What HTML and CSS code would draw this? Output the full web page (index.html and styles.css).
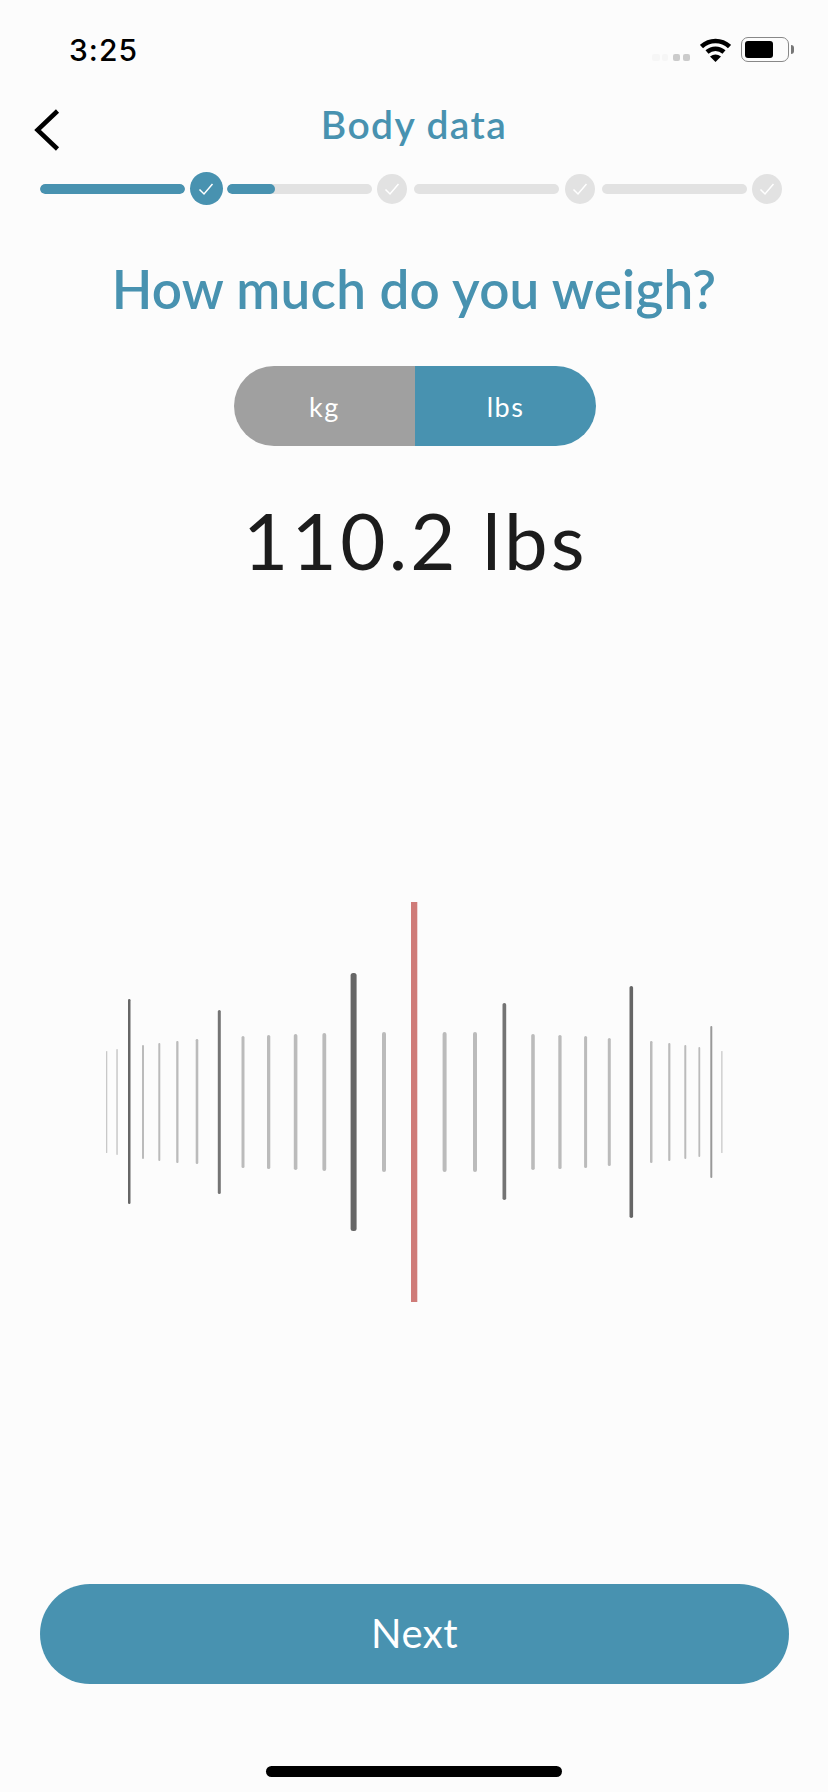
FILE: index.html
```html
<!DOCTYPE html>
<html>

    <head>
        <meta charset="utf-8">
        <link rel="stylesheet" href="styles.css">
    </head>

    <body>
        <div class="screen">
            <div class="status">
                <span class="clock">3:25</span>
                <div class="status-icons">
                    <svg class="signal" width="42" height="14" viewBox="0 0 42 14">
                        <rect x="0" y="6" width="8" height="7" rx="2" fill="#f6f6f6"/>
                        <rect x="10" y="6" width="6" height="7" rx="2" fill="#f6f6f6"/>
                        <rect x="21" y="6" width="7" height="7" rx="2" fill="#cbcbcb"/>
                        <rect x="31" y="6" width="7" height="7" rx="2" fill="#cbcbcb"/>
                    </svg>
                    <svg class="wifi" width="31" height="24" viewBox="0 0 31 24">
                        <path d="M1.500 8.500C9.500 1 21.500 1 29.500 8.500" fill="none" stroke="#000" stroke-width="4.500"/>
                        <path d="M7 14C12 9.500 19 9.500 24 14" fill="none" stroke="#000" stroke-width="4.500"/>
                        <path d="M10 18.500Q15.500 14.500 21 18.500L15.500 24Z" fill="#000"/>
                    </svg>
                    <div class="battery">
                        <div class="battery-fill"></div>
                    </div>
                    <div class="battery-cap"></div>
                </div>
            </div>

            <div class="header">
                <svg class="back" width="28" height="42" viewBox="0 0 28 42">
                    <path d="M24.500 2L4.500 21L24.500 40" fill="none" stroke="#000" stroke-width="4.500"/>
                </svg>
                <h1 class="header-title">Body data</h1>
            </div>

            <div class="steps">
                <div class="bar"><div class="bar-fill full"></div></div>
                <div class="dot dot-on"><svg width="16" height="14" viewBox="0 0 16 14"><path d="M1.500 7.500L6 12L14.500 2" fill="none" stroke="#fff" stroke-width="1.500"/></svg></div>
                <div class="bar"><div class="bar-fill part"></div></div>
                <div class="dot"><svg width="16" height="14" viewBox="0 0 16 14"><path d="M1.500 7.500L6 12L14.500 2" fill="none" stroke="#fff" stroke-width="1.500"/></svg></div>
                <div class="bar"></div>
                <div class="dot"><svg width="16" height="14" viewBox="0 0 16 14"><path d="M1.500 7.500L6 12L14.500 2" fill="none" stroke="#fff" stroke-width="1.500"/></svg></div>
                <div class="bar"></div>
                <div class="dot"><svg width="16" height="14" viewBox="0 0 16 14"><path d="M1.500 7.500L6 12L14.500 2" fill="none" stroke="#fff" stroke-width="1.500"/></svg></div>
            </div>

            <h2 class="question">How much do you weigh?</h2>

            <div class="units">
                <div class="unit unit-kg">kg</div>
                <div class="unit unit-lbs">lbs</div>
            </div>

            <div class="value">110.2 lbs</div>

            <!-- ruler, y is counted from 902 on the screen -->
            <svg class="ruler" width="828" height="400" viewBox="0 0 828 400">
                <g fill="#c8c8c8">
                    <rect x="106" y="149" width="1.300" height="102" rx="0.600"/>
                    <rect x="116.300" y="147" width="1.500" height="106" rx="0.700"/>
                    <rect x="721.200" y="149" width="1.300" height="102" rx="0.600"/>
                </g>
                <g fill="#bbb">
                    <rect x="142" y="143" width="2" height="114" rx="1"/>
                    <rect x="158.300" y="141" width="2" height="118" rx="1"/>
                    <rect x="176.200" y="139" width="2.300" height="122" rx="1"/>
                    <rect x="195.700" y="137" width="2.600" height="125" rx="1.300"/>
                    <rect x="241.500" y="134" width="3" height="132" rx="1.500"/>
                    <rect x="267" y="133" width="3.300" height="134" rx="1.600"/>
                    <rect x="293.800" y="132" width="3.600" height="136" rx="1.800"/>
                    <rect x="322.400" y="131" width="3.800" height="138" rx="1.900"/>
                    <rect x="382" y="130" width="4" height="140" rx="2"/>
                    <rect x="442.600" y="130" width="4" height="140" rx="2"/>
                    <rect x="473" y="130" width="4" height="140" rx="2"/>
                    <rect x="531.200" y="132" width="3.600" height="136" rx="1.800"/>
                    <rect x="558.300" y="133" width="3.300" height="134" rx="1.600"/>
                    <rect x="584.100" y="134" width="3" height="132" rx="1.500"/>
                    <rect x="607.800" y="136" width="3" height="128" rx="1.500"/>
                    <rect x="650" y="139" width="2.500" height="122" rx="1.200"/>
                    <rect x="668.200" y="141" width="2.200" height="118" rx="1.100"/>
                    <rect x="684.300" y="143" width="2" height="114" rx="1"/>
                    <rect x="698.400" y="145" width="1.800" height="110" rx="0.900"/>
                </g>
                <g fill="#666">
                    <rect x="128" y="97" width="2.500" height="205" rx="1.200"/>
                    <rect x="350.600" y="71" width="6" height="258" rx="2.500"/>
                    <rect x="629.500" y="84" width="3.600" height="232" rx="1.800"/>
                </g>
                <g fill="#747474">
                    <rect x="217.800" y="108" width="3" height="184" rx="1.500"/>
                    <rect x="502.500" y="101" width="3.700" height="197" rx="1.800"/>
                </g>
                <rect x="710.300" y="124" width="2" height="152" rx="1" fill="#999"/>
                <rect x="411" y="0" width="6.300" height="400" fill="#cf7b78"/>
            </svg>

            <div class="next">Next</div>
            <div class="home"></div>
        </div>
    </body>

</html>
```

FILE: styles.css
```css
html,
body {
    margin: 0;
    padding: 0;
}

body {
    font-family: "Lato", "Noto Sans", sans-serif;
    background: #fcfcfc;
}

.screen {
    width: 828px;
    height: 1792px;
    overflow: hidden;
    display: flex;
    flex-direction: column;
}

.status {
    height: 50px;
    padding: 30px 34px 0 69px;
    display: flex;
    justify-content: space-between;
    align-items: flex-start;
}

.clock {
    font-family: "Inter", "Liberation Sans", sans-serif;
    font-size: 30px;
    font-weight: 500;
    line-height: 40px;
    letter-spacing: 1px;
    color: #000;
}

.status-icons {
    display: flex;
    align-items: center;
    padding-top: 7px;
}

.signal {
    margin: 11px 6px 0 0;
}

.wifi {
    margin-right: 10px;
}

.battery {
    width: 48px;
    height: 25px;
    border: 1.5px solid #888;
    border-radius: 7px;
    padding: 3px;
    box-sizing: border-box;
}

.battery-fill {
    width: 28px;
    height: 100%;
    background: #000;
    border-radius: 3px;
}

.battery-cap {
    width: 3px;
    height: 9px;
    margin-left: 2px;
    background: #777;
    border-radius: 0 3px 3px 0;
}

.header {
    height: 60px;
    margin-top: 15px;
    padding-bottom: 3px;
    box-sizing: border-box;
    display: flex;
    align-items: center;
    justify-content: center;
    position: relative;
}

.back {
    position: absolute;
    left: 33px;
    top: 14px;
}

.header-title {
    margin: 0;
    font-size: 39px;
    font-weight: 600;
    letter-spacing: 1.400px;
    color: #4892b0;
}

.steps {
    margin-top: 17px;
    padding-left: 40px;
    display: flex;
    align-items: center;
    height: 33px;
}

.bar {
    width: 145px;
    height: 10px;
    border-radius: 5px;
    background: #e2e2e2;
    margin-right: 5.5px;
    overflow: hidden;
    flex: none;
}

.bar-fill {
    height: 100%;
    background: #4892b0;
    border-radius: 5px;
}

.full {
    width: 100%;
}

.part {
    width: 48px;
}

.dot {
    width: 30px;
    height: 30px;
    border-radius: 50%;
    background: #e2e2e2;
    margin-right: 7px;
    display: flex;
    align-items: center;
    justify-content: center;
    flex: none;
}

.dot-on {
    width: 33px;
    height: 33px;
    background: #4892b0;
    margin-right: 4px;
    margin-left: -1px;
}

.question {
    margin: 54px 0 0;
    font-size: 53px;
    font-weight: 600;
    letter-spacing: 0.200px;
    line-height: 60px;
    text-align: center;
    color: #4892b0;
}

.units {
    width: 362px;
    height: 80px;
    margin: 47px 0 0 234px;
    display: flex;
    border-radius: 40px;
    overflow: hidden;
}

.unit {
    font-size: 27px;
    letter-spacing: 1.500px;
    color: #fff;
    display: flex;
    align-items: center;
    justify-content: center;
    flex: 1;
}

.unit-kg {
    background: #a0a0a0;
}

.unit-lbs {
    background: #4892b0;
}

.value {
    margin-top: 49px;
    font-size: 78px;
    line-height: 90px;
    text-align: center;
    color: #1c1c1c;
    letter-spacing: 3.300px;
    padding-left: 3px;
}

.ruler {
    display: block;
    margin-top: 317px;
    flex: none;
}

.next {
    margin: 282px 39px 0 40px;
    height: 100px;
    padding-bottom: 2px;
    box-sizing: border-box;
    border-radius: 50px;
    background: #4892b0;
    color: #fff;
    font-size: 40px;
    letter-spacing: 0.500px;
    display: flex;
    align-items: center;
    justify-content: center;
    flex: none;
}

.home {
    width: 296px;
    height: 11px;
    margin: 82px 0 0 266px;
    border-radius: 6px;
    background: #000;
    flex: none;
}
```
